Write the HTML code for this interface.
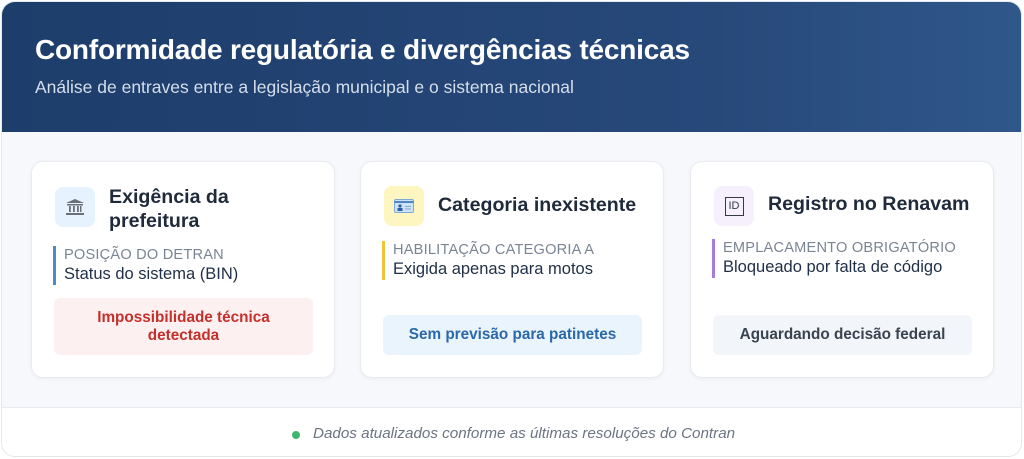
<!DOCTYPE html>
<html><head><meta charset="utf-8"><style>
*{margin:0;padding:0;box-sizing:border-box}
body{width:1024px;height:459px;background:#fff;font-family:"Liberation Sans",sans-serif;overflow:hidden}
.wrap{position:absolute;left:1px;top:1px;width:1021px;height:456px;border-radius:14px;overflow:hidden;background:#f6f8fb;border:1px solid #e3e8ef}
.hdr{position:absolute;left:0;top:0;width:100%;height:130px;background:linear-gradient(90deg,#1d3d6b,#27497a 70%,#30578a)}
.hdr h1{position:absolute;left:33px;top:32px;color:#fff;font-size:28px;font-weight:bold;letter-spacing:-0.2px}
.hdr p{position:absolute;left:33px;top:75px;color:#d5deea;font-size:17.5px}
.card{position:absolute;top:159px;width:304px;height:217px;background:#fff;border-radius:12px;border:1px solid #e8ecf1;box-shadow:0 1px 4px rgba(0,0,0,.05)}
.ic{position:absolute;left:23px;width:40px;height:40px;border-radius:8px;display:flex;align-items:center;justify-content:center}
.tt{position:absolute;left:77px;font-size:19.6px;font-weight:bold;color:#1f2a3b;line-height:24px}
.sec{position:absolute;left:21px;padding-left:8px;border-left:3px solid}
.sec .a{font-size:14.6px;color:#7a8594;letter-spacing:0.2px;line-height:18px}
.sec .b{font-size:16.5px;color:#1f2f47;line-height:21px}
.bx{position:absolute;left:22px;width:259px;border-radius:6px;font-weight:bold;font-size:15.3px;text-align:center;display:flex;align-items:center;justify-content:center;line-height:18px}
.ft{position:absolute;left:0;top:405px;width:100%;height:52px;background:#fff;border-top:1px solid #e6ebf1}
.ft span{position:absolute;left:311px;top:17px;font-style:italic;font-size:15.2px;color:#6b7482}
.dot{position:absolute;left:290px;top:23px;width:8px;height:8px;border-radius:50%;background:#3fb56d}
</style></head><body><div class="wrap">
<div class="hdr"><h1>Conformidade regulatória e divergências técnicas</h1><p>Análise de entraves entre a legislação municipal e o sistema nacional</p></div>

<div class="card" style="left:29px">
<div class="ic" style="top:25px;background:#e6f2fd"><svg width="20" height="18" viewBox="0 0 20 18"><path d="M10 1L1 5h18z" fill="#6b6f78"/><rect x="2" y="6" width="16" height="1.5" fill="#6b6f78"/><rect x="4" y="8" width="1.8" height="6" fill="#6b6f78"/><rect x="8" y="8" width="1.8" height="6" fill="#6b6f78"/><rect x="12" y="8" width="1.8" height="6" fill="#6b6f78"/><rect x="15" y="8" width="1.5" height="6" fill="#6b6f78"/><rect x="1" y="15" width="18" height="2" fill="#6b6f78"/></svg></div>
<div class="tt" style="top:23px">Exigência da<br>prefeitura</div>
<div class="sec" style="top:84px;border-color:#4a8cc7"><div class="a">POSIÇÃO DO DETRAN</div><div class="b">Status do sistema (BIN)</div></div>
<div class="bx" style="top:136px;height:57px;background:#fdf0f0;color:#c4302b">Impossibilidade técnica<br>detectada</div>
</div>

<div class="card" style="left:358px">
<div class="ic" style="top:24px;background:#fdf6c0"><svg width="20" height="14" viewBox="0 0 20 14"><rect x="0.5" y="0.5" width="19" height="13" rx="1.5" fill="#cfe3f7" stroke="#7fa8d6"/><rect x="0.5" y="2" width="19" height="2" fill="#4f86c6"/><circle cx="6" cy="7" r="1.6" fill="#2e5f9e"/><rect x="3.5" y="9" width="5" height="3" fill="#2e5f9e"/><rect x="11" y="7" width="6" height="1" fill="#7fa8d6"/><rect x="11" y="9.5" width="6" height="1" fill="#7fa8d6"/></svg></div>
<div class="tt" style="top:31px">Categoria inexistente</div>
<div class="sec" style="top:79px;border-color:#f0c43a"><div class="a">HABILITAÇÃO CATEGORIA A</div><div class="b">Exigida apenas para motos</div></div>
<div class="bx" style="top:153px;height:40px;background:#e9f4fd;color:#2c67a8">Sem previsão para patinetes</div>
</div>

<div class="card" style="left:688px">
<div class="ic" style="top:24px;background:#f6f0fc"><div style="width:19px;height:19px;border:1.5px solid #333a45;font-size:11px;color:#333a45;display:flex;align-items:center;justify-content:center">ID</div></div>
<div class="tt" style="top:30px">Registro no Renavam</div>
<div class="sec" style="top:77px;border-color:#a67be0"><div class="a">EMPLACAMENTO OBRIGATÓRIO</div><div class="b">Bloqueado por falta de código</div></div>
<div class="bx" style="top:153px;height:40px;background:#f2f5f9;color:#3a4350">Aguardando decisão federal</div>
</div>

<div class="ft"><div class="dot"></div><span>Dados atualizados conforme as últimas resoluções do Contran</span></div>
</div></body></html>
